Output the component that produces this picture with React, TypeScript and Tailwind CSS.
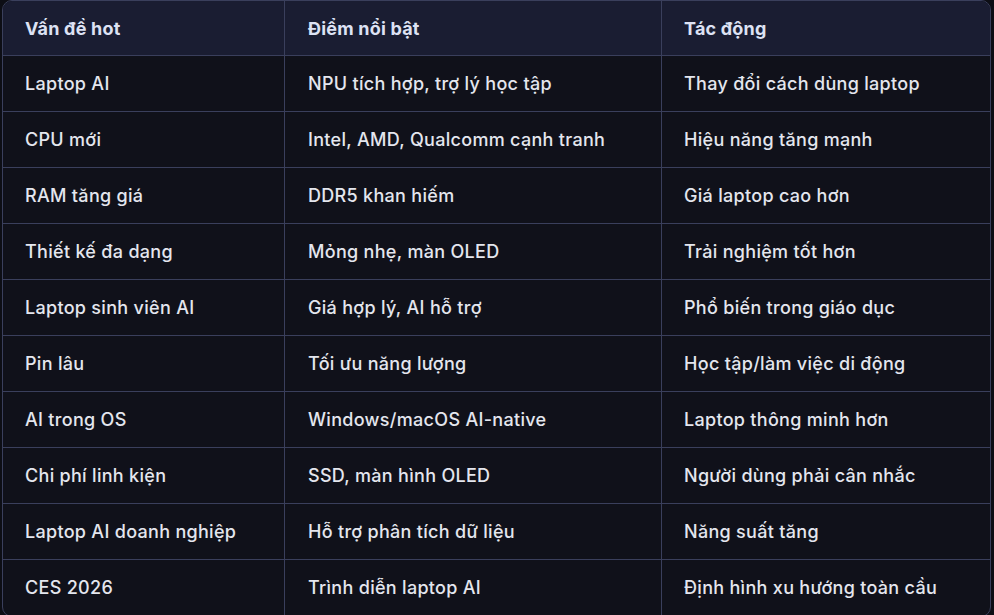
import React from "react";

const rows: [string, string, string][] = [
  ["Laptop AI", "NPU tích hợp, trợ lý học tập", "Thay đổi cách dùng laptop"],
  ["CPU mới", "Intel, AMD, Qualcomm cạnh tranh", "Hiệu năng tăng mạnh"],
  ["RAM tăng giá", "DDR5 khan hiếm", "Giá laptop cao hơn"],
  ["Thiết kế đa dạng", "Mỏng nhẹ, màn OLED", "Trải nghiệm tốt hơn"],
  ["Laptop sinh viên AI", "Giá hợp lý, AI hỗ trợ", "Phổ biến trong giáo dục"],
  ["Pin lâu", "Tối ưu năng lượng", "Học tập/làm việc di động"],
  ["AI trong OS", "Windows/macOS AI-native", "Laptop thông minh hơn"],
  ["Chi phí linh kiện", "SSD, màn hình OLED", "Người dùng phải cân nhắc"],
  ["Laptop AI doanh nghiệp", "Hỗ trợ phân tích dữ liệu", "Năng suất tăng"],
  ["CES 2026", "Trình diễn laptop AI", "Định hình xu hướng toàn cầu"],
];

export default function App() {
  return (
    <div
      className="w-[994px] h-[615px] bg-[#0d0e15] overflow-hidden pl-[2px] pr-[3px]"
      style={{ fontFamily: "Inter, 'Noto Sans', sans-serif" }}
    >
      <div className="border border-[#3a3f5c] rounded-[10px] overflow-hidden bg-[#10111a]">
        <div className="grid grid-cols-[282px_377px_1fr] h-[55px] bg-[#1a1d32] border-b border-[#3a3f5c] text-[18px] font-bold text-[#dde2f4] tracking-[0.2px]">
          <div className="border-r border-[#3a3f5c] flex items-center pl-[22px]">Vấn đề hot</div>
          <div className="border-r border-[#3a3f5c] flex items-center pl-[23px]">Điểm nổi bật</div>
          <div className="flex items-center pl-[22px]">Tác động</div>
        </div>
        {rows.map((r, i) => (
          <div
            key={i}
            className="grid grid-cols-[282px_377px_1fr] h-[56px] border-b border-[#3a3f5c] text-[18px] font-medium text-[#e4e6ee] tracking-[0.3px]"
          >
            <div className="border-r border-[#3a3f5c] flex items-center pl-[22px]">{r[0]}</div>
            <div className="border-r border-[#3a3f5c] flex items-center pl-[23px]">{r[1]}</div>
            <div className="flex items-center pl-[22px]">{r[2]}</div>
          </div>
        ))}
      </div>
    </div>
  );
}
